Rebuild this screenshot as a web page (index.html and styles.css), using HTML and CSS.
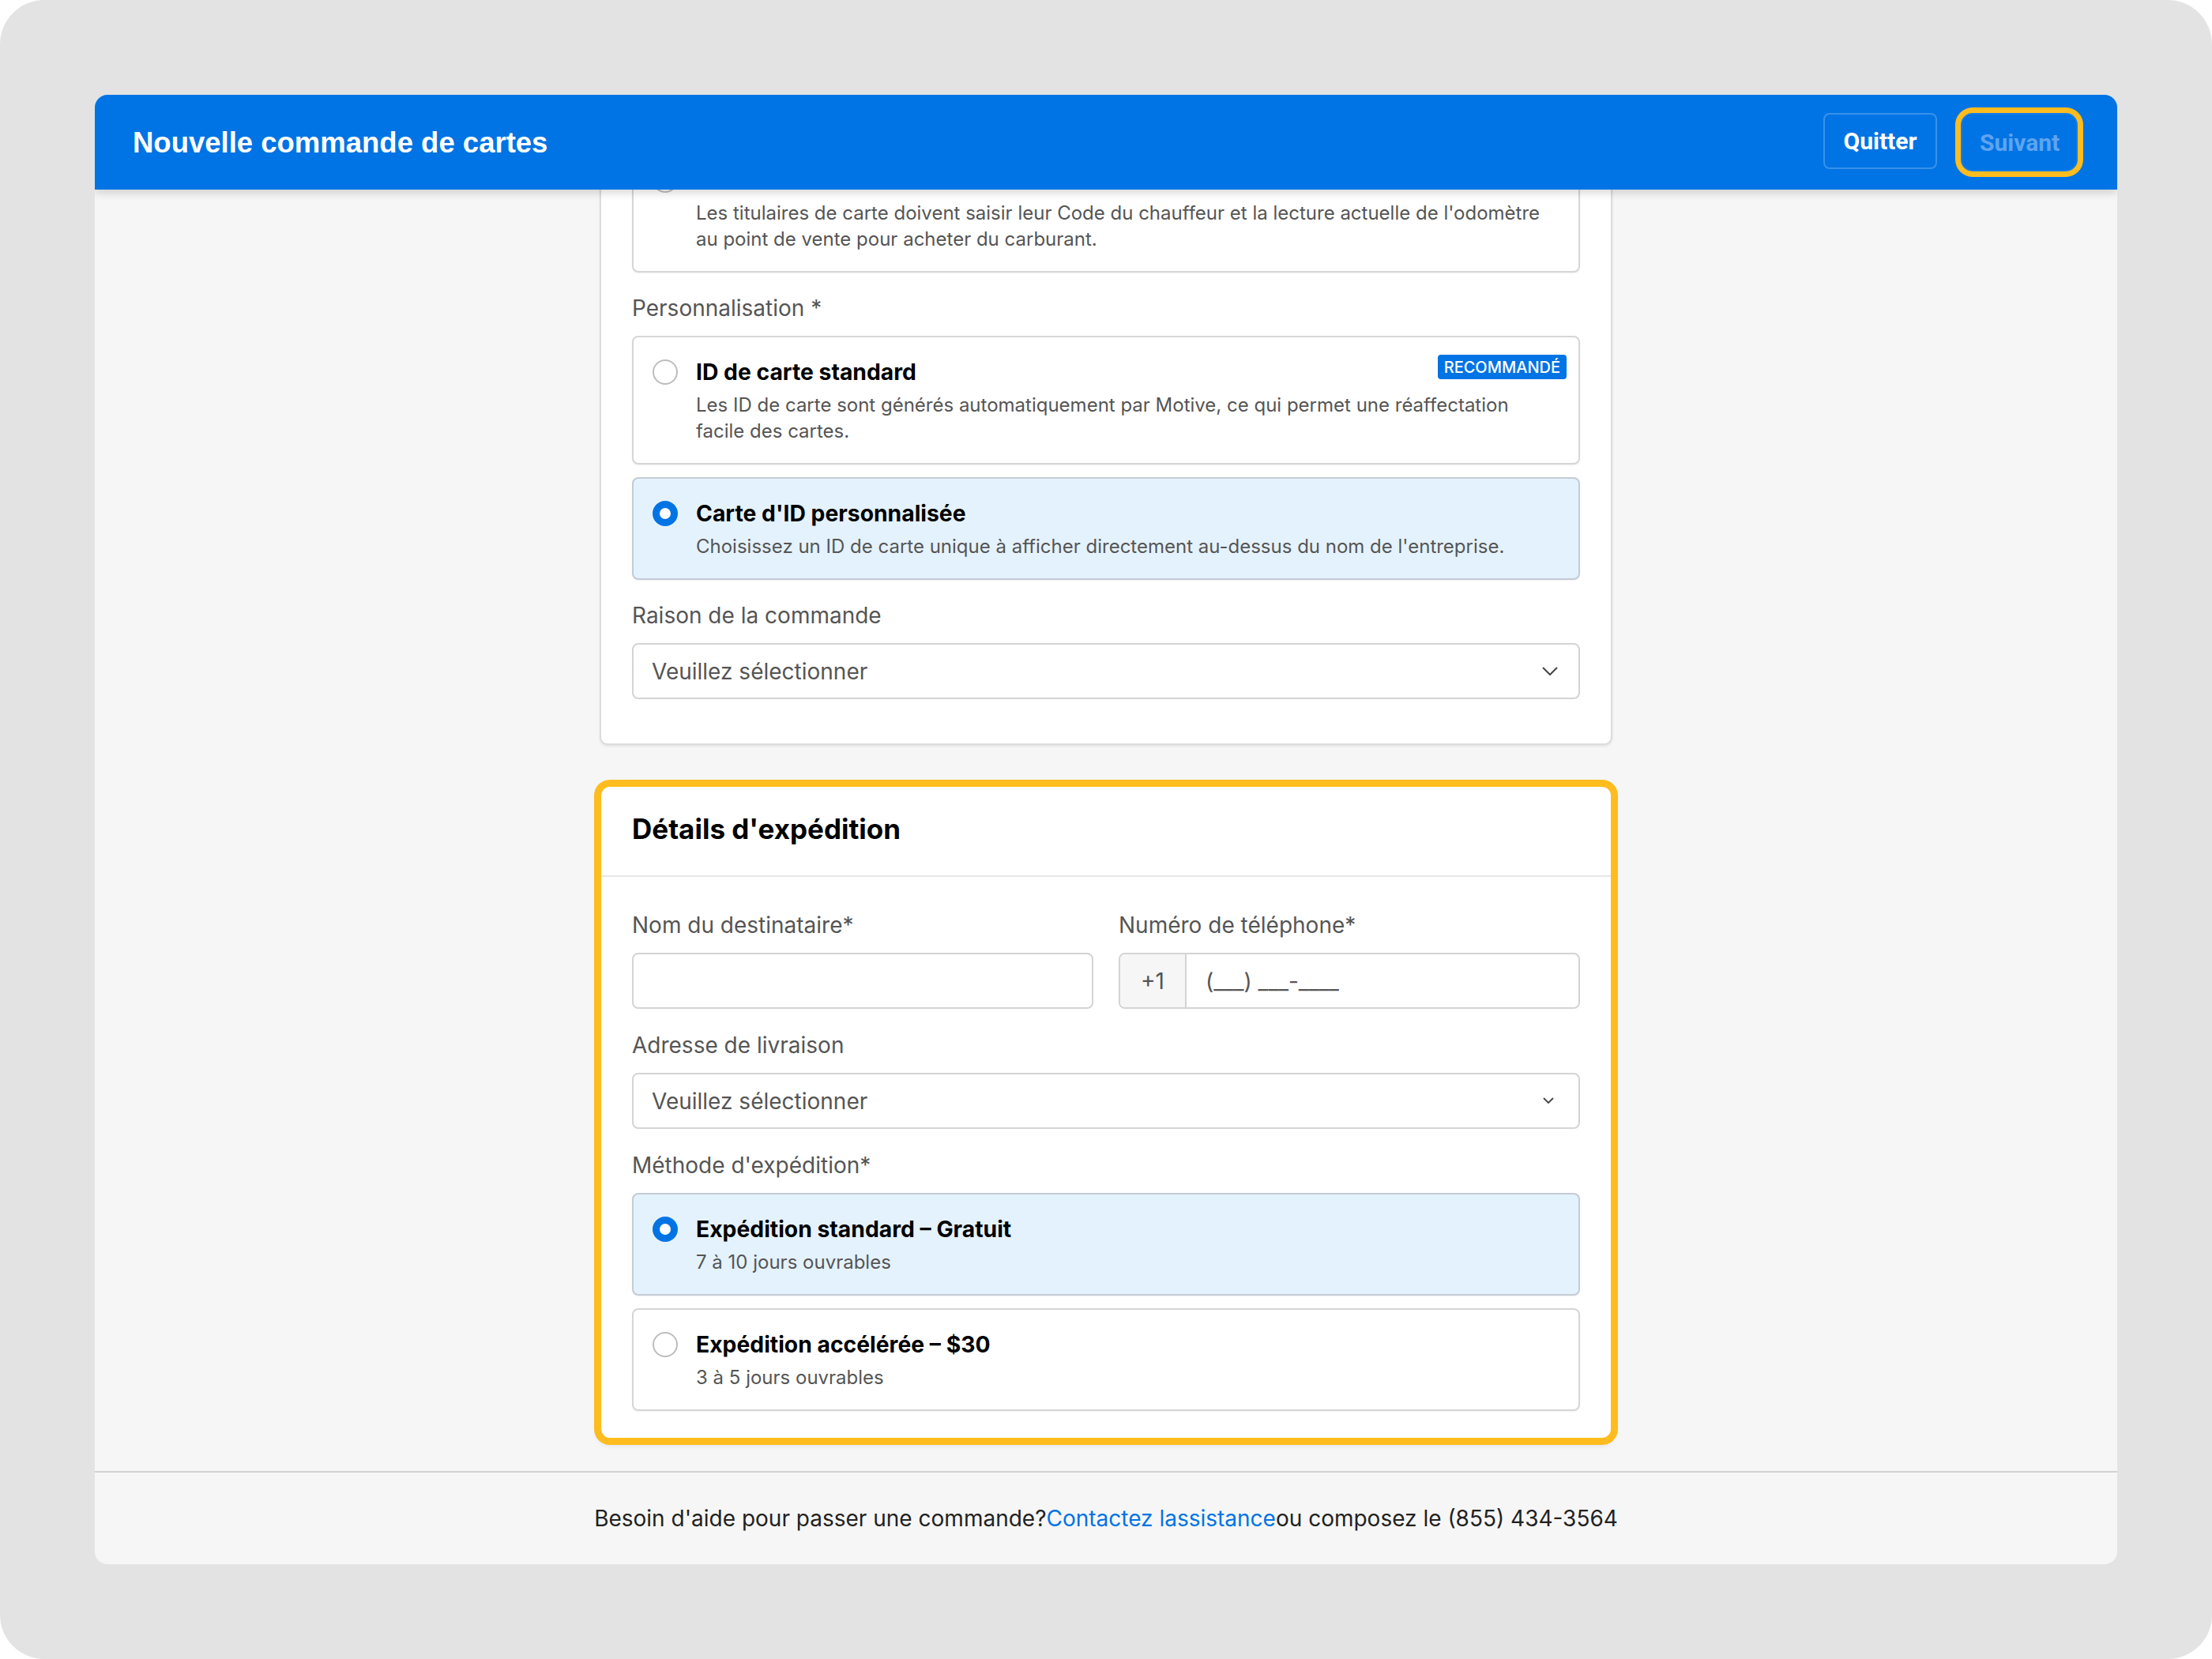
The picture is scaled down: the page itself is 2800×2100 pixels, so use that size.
FILE: index.html
```html
<!DOCTYPE html>
<html lang="fr">
<head>
    <meta charset="UTF-8">
    <meta name="viewport" content="width=device-width, initial-scale=1.0">
    <title>Nouvelle commande de cartes</title>
    <link rel="stylesheet" href="styles.css">
</head>
<body>

<div class="frame">
    <div class="window">

        <!-- Top bar -->
        <header class="topbar">
            <h1 class="topbar-title">Nouvelle commande de cartes</h1>
            <div class="topbar-actions">
                <button class="btn btn-quit">Quitter</button>
                <button class="btn btn-next">Suivant</button>
            </div>
        </header>

        <!-- Scrolled form area -->
        <main class="content">
            <div class="scroller">

                <section class="card">
                    <div class="option">
                        <span class="radio"></span>
                        <div class="option-title">Code du chauffeur et odomètre</div>
                        <div class="option-desc">Les titulaires de carte doivent saisir leur Code du chauffeur et la lecture actuelle de l'odomètre au point de vente pour acheter du carburant.</div>
                    </div>

                    <div class="field">
                        <div class="label">Personnalisation *</div>
                        <div class="option-list">
                            <div class="option">
                                <span class="radio"></span>
                                <div class="option-title">ID de carte standard</div>
                                <div class="option-desc">Les ID de carte sont générés automatiquement par Motive, ce qui permet une réaffectation facile des cartes.</div>
                                <span class="badge">RECOMMANDÉ</span>
                            </div>
                            <div class="option is-selected">
                                <span class="radio is-checked"></span>
                                <div class="option-title">Carte d'ID personnalisée</div>
                                <div class="option-desc">Choisissez un ID de carte unique à afficher directement au-dessus du nom de l'entreprise.</div>
                            </div>
                        </div>
                    </div>

                    <div class="field">
                        <div class="label">Raison de la commande</div>
                        <div class="select">
                            <span>Veuillez sélectionner</span>
                            <svg class="chevron" width="20" height="11" viewBox="0 0 20 11"><path d="M1 1l9 9 9-9" fill="none" stroke="#444" stroke-width="2"/></svg>
                        </div>
                    </div>
                </section>

                <section class="card card-shipping">
                    <div class="card-head">
                        <h2 class="card-title">Détails d'expédition</h2>
                    </div>
                    <div class="card-body">
                        <div class="field-row">
                            <div class="field">
                                <div class="label">Nom du destinataire*</div>
                                <div class="input"></div>
                            </div>
                            <div class="field">
                                <div class="label">Numéro de téléphone*</div>
                                <div class="input phone">
                                    <span class="phone-prefix">+1</span>
                                    <span class="phone-mask">(___) ___-____</span>
                                </div>
                            </div>
                        </div>

                        <div class="field">
                            <div class="label">Adresse de livraison</div>
                            <div class="select">
                                <span>Veuillez sélectionner</span>
                                <svg class="chevron chevron-small" width="14" height="9" viewBox="0 0 14 9"><path d="M1 1l6 6 6-6" fill="none" stroke="#444" stroke-width="1.8"/></svg>
                            </div>
                        </div>

                        <div class="field">
                            <div class="label">Méthode d'expédition*</div>
                            <div class="option-list">
                                <div class="option is-selected">
                                    <span class="radio is-checked"></span>
                                    <div class="option-title">Expédition standard – Gratuit</div>
                                    <div class="option-desc">7 à 10 jours ouvrables</div>
                                </div>
                                <div class="option">
                                    <span class="radio"></span>
                                    <div class="option-title">Expédition accélérée – $30</div>
                                    <div class="option-desc">3 à 5 jours ouvrables</div>
                                </div>
                            </div>
                        </div>
                    </div>
                </section>

            </div>
        </main>

        <footer class="footer">
            Besoin d'aide pour passer une commande?<a href="#" class="footer-link">Contactez lassistance</a>ou composez le (855) 434-3564
        </footer>

    </div>
</div>

</body>
</html>
```

FILE: styles.css
```css
* {
    box-sizing: border-box;
}

body {
    margin: 0;
    background-color: #fff;
    font-family: 'Inter', 'Noto Sans', sans-serif;
    color: #111;
}

.frame {
    width: 2800px;
    height: 2100px;
    padding: 120px;
    background-color: #e3e3e3;
    border-radius: 56px;
}

.window {
    height: 1860px;
    display: flex;
    flex-direction: column;
    background-color: #f6f6f6;
    border-radius: 16px;
    overflow: hidden;
}

/* Top bar */

.topbar {
    position: relative;
    z-index: 1;
    height: 120px;
    flex-shrink: 0;
    display: flex;
    justify-content: space-between;
    align-items: center;
    padding: 0 50px 0 48px;
    background-color: #0074e4;
    box-shadow: 0 4px 10px rgba(0, 0, 0, 0.16);
}

.topbar-title {
    margin: 2px 0 0;
    font-family: 'Liberation Sans', Arial, sans-serif;
    font-size: 36.5px;
    font-weight: 700;
    color: #fff;
}

.topbar-actions {
    display: flex;
    gap: 30px;
}

.btn {
    height: 71px;
    padding: 0 22px;
    font-family: 'Roboto', sans-serif;
    font-size: 30px;
    font-weight: 700;
    background-color: #0074e4;
    border-radius: 8px;
    cursor: pointer;
}

.btn-quit {
    width: 144px;
    color: #fff;
    border: 2px solid rgba(255, 255, 255, 0.22);
}

.btn-next {
    width: 148px;
    height: 74px;
    color: #5ea4f0;
    border: 2px solid rgba(255, 255, 255, 0.08);
    border-radius: 15px;
    box-shadow: 0 0 0 7px #ffbc1f;
}

/* Form area */

.content {
    flex: 1;
    overflow: hidden;
}

.scroller {
    width: 1282px;
    margin: -99px auto 0;
    display: flex;
    flex-direction: column;
    gap: 51px;
}

.card {
    display: flex;
    flex-direction: column;
    gap: 27px;
    padding: 39px 39px 56px;
    background-color: #fff;
    border: 2px solid #dcdcdc;
    border-radius: 10px;
    box-shadow: 0 2px 3px rgba(0, 0, 0, 0.08);
}

.card-shipping {
    display: block;
    padding: 0;
    border-color: #ffbc1f;
    border-radius: 13px;
    box-shadow: 0 0 0 7px #ffbc1f, 0 6px 8px rgba(0, 0, 0, 0.14);
}

.card-head {
    padding: 33px 39px 39px;
    border-bottom: 2px solid #e7e7e7;
}

.card-title {
    margin: 0;
    font-size: 35px;
    line-height: 40px;
    font-weight: 700;
    color: #000;
}

.card-body {
    display: flex;
    flex-direction: column;
    gap: 28px;
    padding: 43px 39px 34px;
}

.field {
    display: flex;
    flex-direction: column;
    gap: 17px;
}

.field-row {
    display: grid;
    grid-template-columns: 1fr 1fr;
    gap: 32px;
}

.label {
    font-size: 28px;
    line-height: 36px;
    color: #555;
}

.input,
.select {
    height: 71px;
    background-color: #fff;
    border: 2px solid #d4d4d4;
    border-radius: 8px;
}

.select {
    display: flex;
    justify-content: space-between;
    align-items: center;
    padding: 0 26px 0 23px;
    font-size: 28px;
    color: #555;
}

.chevron-small {
    margin-right: 5px;
}

.phone {
    display: flex;
    overflow: hidden;
}

.phone-prefix {
    width: 84px;
    display: flex;
    justify-content: center;
    align-items: center;
    background-color: #f6f6f6;
    border-right: 2px solid #d4d4d4;
    font-size: 28px;
    color: #555;
}

.phone-mask {
    display: flex;
    align-items: center;
    padding-left: 24px;
    font-size: 28px;
    color: #555;
}

/* Radio options */

.option-list {
    display: flex;
    flex-direction: column;
    gap: 16px;
}

.option {
    position: relative;
    display: grid;
    grid-template-columns: 32px 1fr;
    column-gap: 23px;
    align-items: center;
    padding: 24px 38px 24px 24px;
    background-color: #fff;
    border: 2px solid #d6d6d6;
    border-radius: 8px;
    box-shadow: 0 1px 2px rgba(0, 0, 0, 0.06);
}

.option.is-selected {
    background-color: #e4f2fd;
    border-color: #c3ccd6;
}

.radio {
    width: 32px;
    height: 32px;
    background-color: #fff;
    border: 2px solid #bdbdbd;
    border-radius: 50%;
}

.radio.is-checked {
    border: 9px solid #0074e4;
}

.option-title {
    font-size: 28.3px;
    line-height: 40px;
    font-weight: 700;
    color: #000;
}

.option-desc {
    grid-column: 2;
    margin-top: 5px;
    font-size: 24px;
    line-height: 33px;
    color: #555;
}

.badge {
    position: absolute;
    top: 22px;
    right: 15px;
    height: 31px;
    padding: 0 8px;
    display: flex;
    align-items: center;
    background-color: #0074e4;
    border-radius: 4px;
    font-size: 20px;
    font-weight: 500;
    color: #fff;
}

/* Footer */

.footer {
    height: 118px;
    flex-shrink: 0;
    display: flex;
    justify-content: center;
    align-items: center;
    border-top: 2px solid #d2d2d2;
    font-size: 28px;
    color: #222;
}

.footer-link {
    color: #0074e4;
    text-decoration: none;
}
```
